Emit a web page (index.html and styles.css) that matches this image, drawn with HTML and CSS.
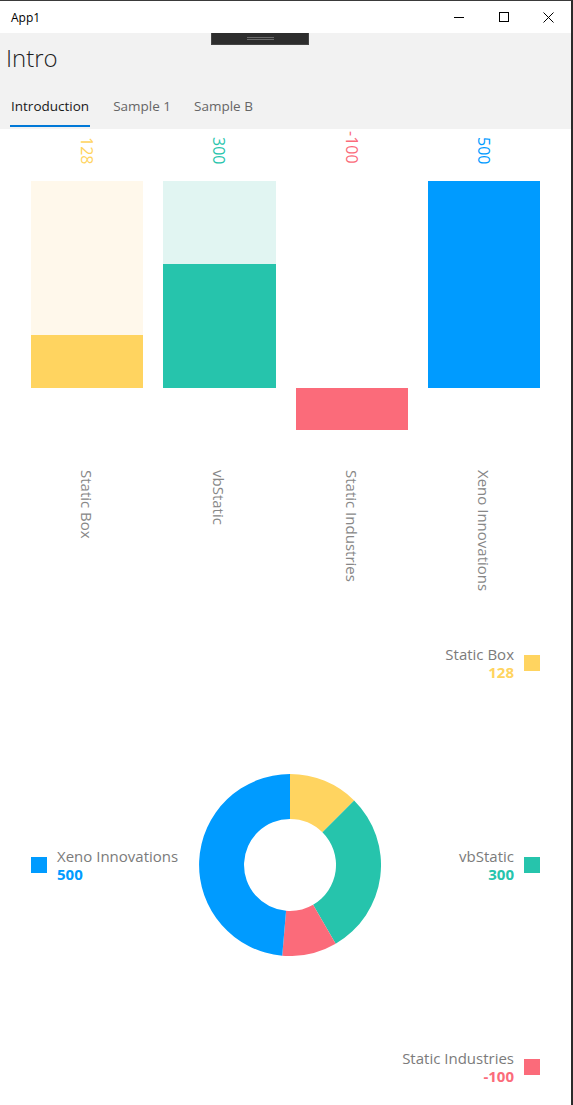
FILE: index.html
```html
<html>
<head>
<title>App1</title>
<link rel="stylesheet" href="styles.css">
</head>
<body>
<div class="window">
  <div class="titlebar">
    <span class="app-name">App1</span>
    <div class="controls">
      <span class="control"><svg width="10" height="10" viewBox="0 0 10 10"><path d="M0 5.5h10" stroke="#000" stroke-width="1"/></svg></span>
      <span class="control"><svg width="10" height="10" viewBox="0 0 10 10"><rect x="0.5" y="0.5" width="9" height="9" fill="none" stroke="#000" stroke-width="1"/></svg></span>
      <span class="control"><svg width="11" height="11" viewBox="0 0 11 11"><path d="M0.5 0.5l10 10M10.5 0.5l-10 10" stroke="#000" stroke-width="1"/></svg></span>
    </div>
  </div>

  <div class="header">
    <div class="dev-toolbar"><span class="grip"></span></div>
    <h1 class="page-title">Intro</h1>
    <nav class="tabs">
      <a class="tab active">Introduction</a>
      <a class="tab">Sample 1</a>
      <a class="tab">Sample B</a>
    </nav>
  </div>

  <div class="content">
    <!-- column chart, zero line 207px below top of track, 0.414px per unit -->
    <section class="bar-chart">
      <div class="bar-col yellow">
        <div class="value-label">128</div>
        <div class="plot">
          <div class="track"><div class="bar" style="height:53px"></div></div>
          <div class="below"></div>
        </div>
        <div class="name-wrap"><div class="name-label">Static Box</div></div>
      </div>
      <div class="bar-col teal">
        <div class="value-label">300</div>
        <div class="plot">
          <div class="track"><div class="bar" style="height:124px"></div></div>
          <div class="below"></div>
        </div>
        <div class="name-wrap"><div class="name-label">vbStatic</div></div>
      </div>
      <div class="bar-col red">
        <div class="value-label">-100</div>
        <div class="plot">
          <div class="track"></div>
          <div class="below"><div class="bar" style="height:42px"></div></div>
        </div>
        <div class="name-wrap"><div class="name-label">Static Industries</div></div>
      </div>
      <div class="bar-col blue">
        <div class="value-label">500</div>
        <div class="plot">
          <div class="track"><div class="bar" style="height:207px"></div></div>
          <div class="below"></div>
        </div>
        <div class="name-wrap"><div class="name-label">Xeno Innovations</div></div>
      </div>
    </section>

    <!-- doughnut chart with legend -->
    <section class="pie-chart">
      <div class="legend legend-left">
        <div class="legend-item blue">
          <span class="swatch"></span>
          <div class="legend-text"><div class="legend-name">Xeno Innovations</div><div class="legend-value">500</div></div>
        </div>
      </div>
      <div class="donut">
        <svg width="182" height="182" viewBox="0 0 182 182">
          <path fill="#ffd460" d="M91 0A91 91 0 0 1 155.15 26.45L123.43 58.37A46 46 0 0 0 91 45Z"/>
          <path fill="#26c4ac" d="M155.15 26.45A91 91 0 0 1 136.66 169.72L114.08 130.79A46 46 0 0 0 123.43 58.37Z"/>
          <path fill="#fb6b7a" d="M136.66 169.72A91 91 0 0 1 83.23 181.66L87.07 136.83A46 46 0 0 0 114.08 130.79Z"/>
          <path fill="#009bff" d="M83.23 181.66A91 91 0 0 1 91 0L91 45A46 46 0 0 0 87.07 136.83Z"/>
        </svg>
      </div>
      <div class="legend legend-right">
        <div class="legend-item yellow">
          <div class="legend-text"><div class="legend-name">Static Box</div><div class="legend-value">128</div></div>
          <span class="swatch"></span>
        </div>
        <div class="legend-item teal">
          <div class="legend-text"><div class="legend-name">vbStatic</div><div class="legend-value">300</div></div>
          <span class="swatch"></span>
        </div>
        <div class="legend-item red">
          <div class="legend-text"><div class="legend-name">Static Industries</div><div class="legend-value">-100</div></div>
          <span class="swatch"></span>
        </div>
      </div>
    </section>
  </div>
</div>
</body>
</html>
```

FILE: styles.css
```css
body {
  margin: 0;
  padding: 0;
  overflow: hidden;
  background: white;
  font-family: "Open Sans", "Noto Sans", sans-serif;
}

.window {
  height: 1105px;
  box-sizing: border-box;
  border-top: 1px solid #3a3a3a;
  border-right: 2px solid #2b2b2b;
  overflow: hidden;
}

/* Title bar */
.titlebar {
  height: 32px;
  display: flex;
  align-items: center;
  justify-content: space-between;
  background: white;
}
.app-name {
  padding-left: 11px;
  font-size: 12px;
  color: #000;
}
.controls {
  display: flex;
  height: 100%;
}
.control {
  width: 45px;
  display: flex;
  align-items: center;
  justify-content: center;
}
.control svg {
  display: block;
}

/* Header with page title and tabs */
.header {
  position: relative;
  background: #f2f2f2;
  height: 96px;
  display: flex;
  flex-direction: column;
}
.dev-toolbar {
  position: absolute;
  top: 0;
  left: 211px;
  width: 98px;
  height: 12px;
  background: #2d2d2d;
  border: 1px solid #444;
  border-top: none;
  display: flex;
  justify-content: center;
  padding-top: 4px;
  box-sizing: border-box;
}
.grip {
  width: 27px;
  height: 3px;
  border-top: 1px solid #6a6a6a;
  border-bottom: 1px solid #6a6a6a;
  box-sizing: border-box;
}
.page-title {
  margin: 0;
  padding: 9px 0 0 6px;
  font-size: 24px;
  font-weight: 300;
  line-height: 32px;
  color: #1f1f1f;
}
.tabs {
  display: flex;
  gap: 23px;
  padding: 22px 0 0 11px;
}
.tab {
  font-size: 13.5px;
  color: #666;
  line-height: 20px;
  padding-bottom: 9px;
  border-bottom: 2px solid transparent;
}
.tab.active {
  color: #1a1a1a;
  border-bottom-color: #0078d7;
  margin-left: -1px;
  padding: 0 1px 9px 1px;
}

/* Column chart */
.bar-chart {
  display: grid;
  grid-template-columns: repeat(4, 1fr);
  gap: 20px;
  padding: 0 31px 0 31px;
}
.bar-col {
  display: flex;
  flex-direction: column;
}
.value-label {
  height: 52px;
  box-sizing: border-box;
  padding-bottom: 17px;
  align-self: center;
  writing-mode: vertical-rl;
  text-align: end;
  font-size: 16px;
  line-height: 18px;
}
.plot {
  display: flex;
  flex-direction: column;
}
.track {
  height: 207px;
  display: flex;
  flex-direction: column;
  justify-content: flex-end;
}
.below {
  height: 42px;
}
.name-wrap {
  height: 171px;
  box-sizing: border-box;
  padding-top: 40px;
  display: flex;
  justify-content: center;
}
.name-label {
  writing-mode: vertical-rl;
  font-size: 15px;
  line-height: 16px;
  color: #878787;
}

.yellow .value-label, .yellow .legend-value { color: #ffd460; }
.yellow .bar, .yellow .swatch { background: #ffd460; }
.yellow .track { background: #fff8eb; }

.teal .value-label, .teal .legend-value { color: #26c4ac; }
.teal .bar, .teal .swatch { background: #26c4ac; }
.teal .track { background: #e1f5f2; }

.red .value-label, .red .legend-value { color: #fb6b7a; }
.red .bar, .red .swatch { background: #fb6b7a; }

.blue .value-label, .blue .legend-value { color: #009bff; }
.blue .bar, .blue .swatch { background: #009bff; }

/* Doughnut chart */
.pie-chart {
  margin-top: 44px;
  height: 440px;
  display: flex;
  padding: 0 31px 0 31px;
}
.legend {
  display: flex;
  flex-direction: column;
}
.legend-left {
  justify-content: center;
}
.legend-right {
  justify-content: space-between;
  align-items: flex-end;
}
.donut {
  flex: 1;
  display: flex;
  align-items: center;
  justify-content: center;
}
.donut svg {
  display: block;
}
.legend-item {
  display: flex;
  align-items: center;
  gap: 10px;
}
.legend-right .legend-text {
  text-align: right;
}
.swatch {
  width: 16px;
  height: 16px;
}
.legend-name {
  font-size: 15px;
  line-height: 18px;
  color: #7b7b7b;
}
.legend-value {
  font-size: 15px;
  font-weight: 700;
  line-height: 18px;
}
```
